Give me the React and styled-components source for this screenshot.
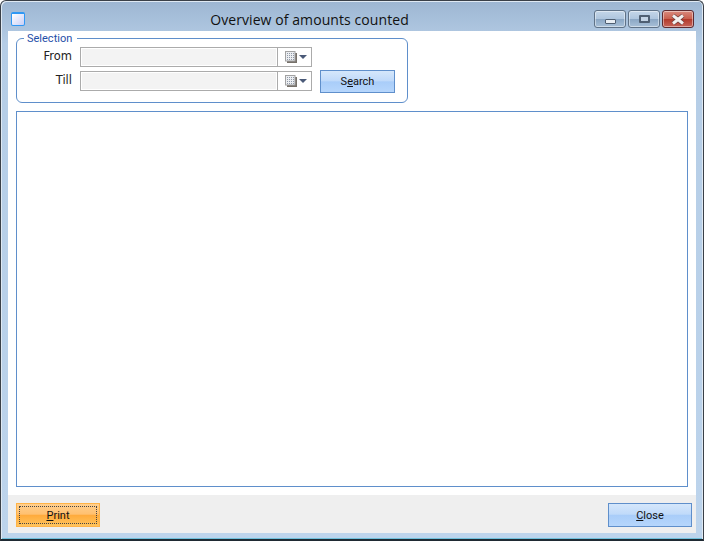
import React from "react";
import styled, { createGlobalStyle } from "styled-components";

const GlobalStyle = createGlobalStyle`
  html, body { margin: 0; padding: 0; background: #fff; }
  body { font-family: "Liberation Sans", Arial, sans-serif; font-size: 12px; }
  * { box-sizing: border-box; }
`;

function CalendarIcon() {
  return (
    <svg width="12" height="12" viewBox="0 0 12 12">
      <rect x="2" y="2" width="10" height="10" fill="#77716a" />
      <rect x="0.5" y="0.5" width="9.5" height="9.5" fill="#eceef1" stroke="#a2a2a2" />
      {[2, 4, 6, 8].map((x) =>
        [2, 4, 6, 8].map((y) => <rect key={x + "-" + y} x={x} y={y} width="1" height="1" fill="#8f99a8" />)
      )}
    </svg>
  );
}

function DateField() {
  return (
    <DateBox>
      <DateInput />
      <DateButton>
        <CalendarIcon />
        <Arrow />
      </DateButton>
    </DateBox>
  );
}

export default function App() {
  return (
    <>
      <GlobalStyle />
      <Window>
        <TitleBar>
          <AppIcon />
          <Title>Overview of amounts counted</Title>
          <Controls>
            <CtrlButton>
              <MinGlyph />
            </CtrlButton>
            <CtrlButton>
              <MaxGlyph />
            </CtrlButton>
            <CloseCtrl>
              <svg width="14" height="11" viewBox="0 0 14 11">
                <path d="M2 1.5 L12 9.5 M12 1.5 L2 9.5" stroke="#6a3a3a" strokeWidth="4.4" />
                <path d="M2 1.5 L12 9.5 M12 1.5 L2 9.5" stroke="#f2f0f0" strokeWidth="3" />
              </svg>
            </CloseCtrl>
          </Controls>
        </TitleBar>
        <Client>
          <Content>
            <Selection>
              <Legend>Selection</Legend>
              <SelectionRow>
                <FieldLabel>From</FieldLabel>
                <DateField />
              </SelectionRow>
              <SelectionRow>
                <FieldLabel>Till</FieldLabel>
                <DateField />
                <SearchButton>
                  S<u>e</u>arch
                </SearchButton>
              </SelectionRow>
            </Selection>
            <ListArea />
          </Content>
          <Footer>
            <PrintButton>
              <FocusRing>
                <u>P</u>rint
              </FocusRing>
            </PrintButton>
            <ActionButton>
              <u>C</u>lose
            </ActionButton>
          </Footer>
        </Client>
      </Window>
    </>
  );
}

const Window = styled.div`
  width: 704px;
  height: 541px;
  display: flex;
  flex-direction: column;
  overflow: hidden;
  background: linear-gradient(180deg, #9db6d2 0%, #b5cde6 8%, #bdd4ec 100%);
  border: 1px solid #3a4048;
  border-bottom: 2px solid #1f2a33;
  border-radius: 6px 6px 0 0;
  box-shadow: inset 1px 1px 0 #dfe9f3, inset -1px 0 0 #dfe9f3, inset 0 -1px 0 #6fc0dc;
`;

const TitleBar = styled.div`
  height: 30px;
  flex: none;
  display: flex;
  align-items: center;
  padding: 0 9px 0 10px;
`;

const AppIcon = styled.div`
  width: 14px;
  height: 14px;
  margin-top: 5px;
  border: 1px solid #2f98f4;
  border-top-width: 2px;
  border-radius: 2px;
  background: linear-gradient(135deg, #ffffff 0%, #c9cff6 100%);
`;

const Title = styled.div`
  flex: 1;
  margin-top: 6px;
  text-align: center;
  font-family: "Open Sans", sans-serif;
  font-size: 14px;
  letter-spacing: 0.08px;
  color: #111;
`;

const Controls = styled.div`
  display: flex;
  gap: 2px;
  align-self: flex-start;
  margin-top: 9px;
`;

const CtrlButton = styled.div`
  width: 32px;
  height: 18px;
  display: flex;
  align-items: center;
  justify-content: center;
  border: 1px solid #5f7287;
  border-radius: 3px;
  background: linear-gradient(180deg, #c4d6e8 0%, #afc6de 48%, #8ba7c4 52%, #a8c0d8 100%);
  box-shadow: inset 0 0 0 1px rgba(255, 255, 255, 0.45);
`;

const CloseCtrl = styled(CtrlButton)`
  border-color: #5e2a30;
  background: linear-gradient(180deg, #d98a7e 0%, #c9604f 48%, #b23a2c 52%, #c6645a 100%);
`;

const MinGlyph = styled.div`
  width: 11px;
  height: 5px;
  margin-top: 5px;
  background: #e8eef4;
  border: 1px solid #4f5f72;
  border-radius: 1px;
`;

const MaxGlyph = styled.div`
  width: 11px;
  height: 8px;
  background: #c3d3e4;
  border: 2px solid #4f5f72;
  border-radius: 1px;
`;

const Client = styled.div`
  flex: 1;
  margin: 0 7px 6px 7px;
  background: #fff;
  display: flex;
  flex-direction: column;
`;

const Content = styled.div`
  flex: 1;
  display: flex;
  flex-direction: column;
  padding: 7px 8px 8px 8px;
  gap: 8px;
`;

const Selection = styled.fieldset`
  width: 392px;
  height: 65px;
  margin: 0;
  padding: 8px 0 0 0;
  border: 1px solid #5f8fcb;
  border-radius: 6px;
  display: flex;
  flex-direction: column;
  gap: 4px;
`;

const Legend = styled.legend`
  margin-left: 7px;
  padding: 0 5px 0 3px;
  height: 0;
  line-height: 0;
  font-family: Roboto, sans-serif;
  font-size: 11px;
  color: #1f4fa8;
`;

const SelectionRow = styled.div`
  display: flex;
  align-items: center;
  height: 20px;
`;

const FieldLabel = styled.div`
  width: 55px;
  margin-right: 8px;
  padding-bottom: 2px;
  text-align: right;
  font-family: "DejaVu Sans", sans-serif;
  font-size: 11.5px;
  color: #222;
`;

const DateBox = styled.div`
  width: 232px;
  height: 20px;
  display: flex;
  border: 1px solid #ababab;
  background: #fff;
`;

const DateInput = styled.div`
  flex: 1;
  margin: 1px;
  background: #f3f3f3;
`;

const DateButton = styled.div`
  width: 34px;
  display: flex;
  align-items: center;
  padding-left: 7px;
  gap: 1px;
  border-left: 1px solid #ababab;
`;

const Arrow = styled.div`
  width: 0;
  height: 0;
  margin-left: 1px;
  border-left: 4px solid transparent;
  border-right: 4px solid transparent;
  border-top: 4px solid #4a5a78;
`;

const ActionButton = styled.button`
  width: 84px;
  height: 24px;
  padding: 1px 0 0;
  border: 1px solid #5f8fcb;
  font-family: Roboto, sans-serif;
  font-size: 11px;
  color: #111;
  background: linear-gradient(180deg, #d5e7fb 0%, #c0dafa 46%, #a9cdf9 52%, #b6d6fc 100%);
`;

const SearchButton = styled(ActionButton)`
  width: 75px;
  height: 23px;
  margin-left: 8px;
  flex: none;
`;

const ListArea = styled.div`
  flex: 1;
  border: 1px solid #5f8fcb;
  background: #fff;
`;

const Footer = styled.div`
  height: 38px;
  flex: none;
  display: flex;
  align-items: center;
  justify-content: space-between;
  padding: 2px 4px 0 8px;
  background: #efefef;
`;

const PrintButton = styled(ActionButton)`
  padding: 2px;
  border-color: #ffb347;
  background: linear-gradient(180deg, #ffcf8e 0%, #ffc070 46%, #ffab3c 52%, #ffc45e 100%);
`;

const FocusRing = styled.span`
  display: flex;
  align-items: center;
  justify-content: center;
  height: 100%;
  padding-top: 1px;
  border: 1px dotted #444;
`;
